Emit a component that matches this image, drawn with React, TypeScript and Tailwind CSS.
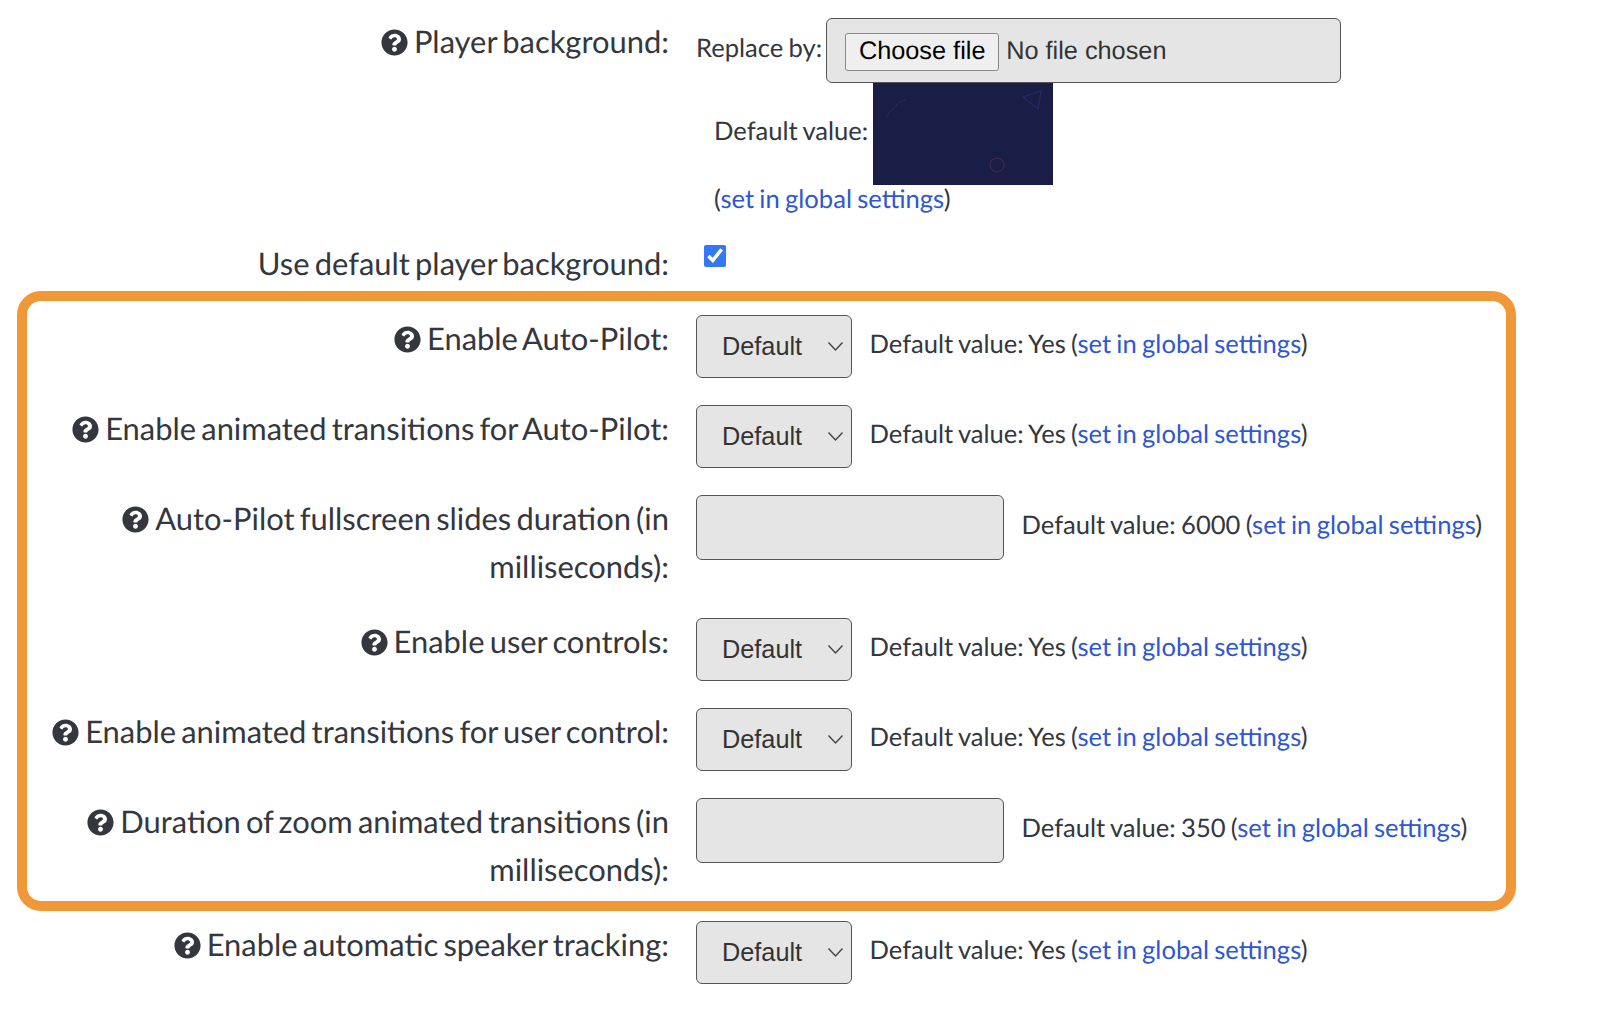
import React from "react";
import { FaQuestionCircle } from "react-icons/fa";

const Link = () => <a className="text-[#2f57cf]">set in global settings</a>;

const Label = ({ help = true, children }: { help?: boolean; children: React.ReactNode }) => (
  <div className="w-[642px] shrink-0 text-right text-[30.9px] [word-spacing:-2.7px] leading-[48px] text-[#34373d] mr-[27px]">
    {help && <FaQuestionCircle className="inline-block w-[27px] h-[27px] mr-[6px] align-[-3px]" />}
    {children}
  </div>
);

const Def = ({ value }: { value: string }) => (
  <span className="text-[25.6px] [word-spacing:-1.3px] text-[#34373d] leading-[36px] mb-[6px]">
    Default value: {value} (<Link />)
  </span>
);

const SelectRow = ({ label, value = "Yes" }: { label: string; value?: string }) => (
  <div className="flex mb-[27px]">
    <Label>{label}</Label>
    <div className="flex items-center gap-[17.5px] h-[63px]">
      <div className="relative">
        <select className="appearance-none block w-[156px] h-[63px] pl-[25px] rounded-[6px] border border-[#555] bg-[#e5e5e5] text-[25.3px] text-[#333] font-['Liberation_Sans',sans-serif]">
          <option>Default</option>
        </select>
        <svg className="absolute right-[8px] top-[26px] w-[17px] h-[11px]" viewBox="0 0 17 11" fill="none" stroke="#444" strokeWidth="1.4">
          <path d="M1.5 1.5 L8.5 9 L15.5 1.5" />
        </svg>
      </div>
      <Def value={value} />
    </div>
  </div>
);

const InputRow = ({ label, value }: { label: string; value: string }) => (
  <div className="flex mb-[27px]">
    <Label>{label}</Label>
    <div className="flex items-center gap-[17.5px] h-[65px]">
      <input className="block w-[308px] h-[65px] rounded-[6px] border border-[#555] bg-[#e5e5e5]" />
      <Def value={value} />
    </div>
  </div>
);

export default function App() {
  return (
    <div className="min-h-[1017px] bg-white pt-[18px] font-['Lato',sans-serif] [text-rendering:geometricPrecision]">
      <div className="flex ml-[27px]">
        <Label>Player background:</Label>
        <div>
          <div className="flex items-center h-[65px]">
            <span className="text-[25.6px] [word-spacing:-1.3px] text-[#34373d] mr-[4px] mb-[4px]">Replace by:</span>
            <label className="flex items-center w-[515px] h-[65px] pl-[18px] pt-[2px] rounded-[6px] border border-[#555] bg-[#e5e5e5] text-[25.3px] text-[#333] font-['Liberation_Sans',sans-serif]">
              <input type="file" className="hidden" />
              <span className="flex items-center justify-center h-[38px] w-[154px] mr-[7px] rounded-[3px] border border-[#888] bg-[#efefef] text-black">
                Choose file
              </span>
              <span>No file chosen</span>
            </label>
          </div>
          <div className="ml-[18px] flex items-center text-[25.6px] [word-spacing:-1.3px] text-[#34373d]">
            <span className="mr-[5px] mb-[6px]">Default value:</span>
            <svg className="block w-[180px] h-[102px]" viewBox="0 1 180 102">
              <rect y="1" width="180" height="102" fill="#1a1d45" />
              <path d="M13 35 C15 35 15 32 16 30 C17 28 19 29 20 27 C21 25 22 26 23 24 C24 21 25 21 27 20 C29 19 30 18 33 18" stroke="#272b63" fill="none" strokeWidth="1" />
              <path d="M150 15 L168 9 L165 27 Z" stroke="#272b63" fill="none" strokeWidth="1.2" />
              <circle cx="124" cy="83" r="7" stroke="#402a4e" fill="none" strokeWidth="1.2" />
            </svg>
          </div>
          <div className="ml-[18px] mt-[1px] -translate-y-px text-[25.6px] [word-spacing:-1.3px] leading-[28px] text-[#34373d]">
            (<Link />)
          </div>
        </div>
      </div>
      <div className="flex ml-[27px] mt-[26px]">
        <Label help={false}>Use default player background:</Label>
        <input
          type="checkbox"
          defaultChecked
          className="block mt-[5px] ml-[8px] w-[22px] h-[22px] accent-[#3478f6]"
        />
      </div>
      <div className="ml-[17px] mt-[3px] w-[1499px] h-[620px] border-[10px] border-[#f09837] rounded-[24px] pt-[14px]">
        <SelectRow label="Enable Auto-Pilot:" />
        <SelectRow label="Enable animated transitions for Auto-Pilot:" />
        <InputRow label="Auto-Pilot fullscreen slides duration (in milliseconds):" value="6000" />
        <SelectRow label="Enable user controls:" />
        <SelectRow label="Enable animated transitions for user control:" />
        <InputRow label="Duration of zoom animated transitions (in milliseconds):" value="350" />
      </div>
      <div className="ml-[27px] mt-[10px]">
        <SelectRow label="Enable automatic speaker tracking:" />
      </div>
    </div>
  );
}
